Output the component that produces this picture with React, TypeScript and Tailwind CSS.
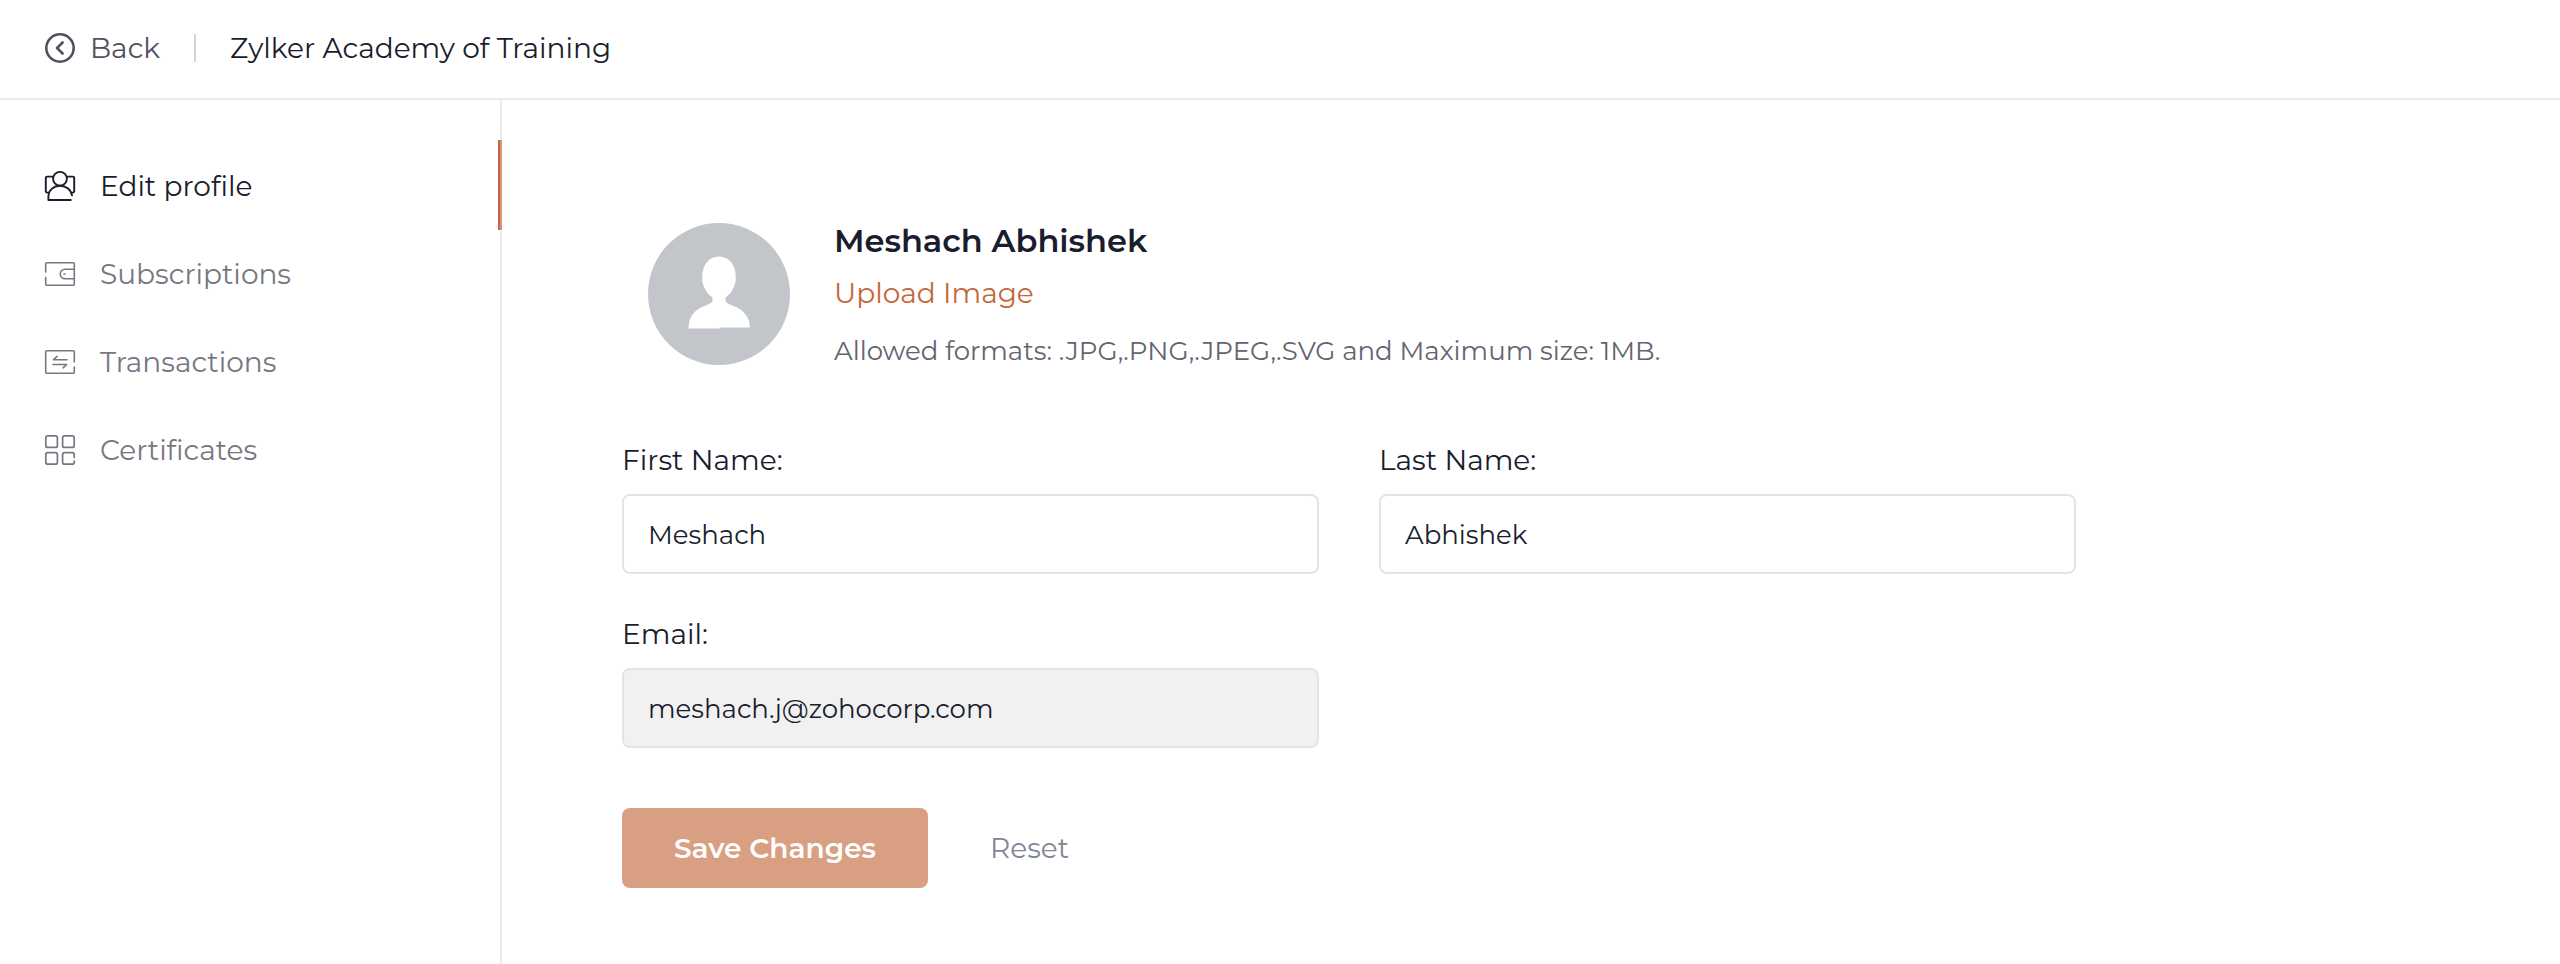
import { useState } from "react";
import type { ChangeEvent, FormEvent, ReactNode } from "react";

type TProfile = {
    firstName: string;
    lastName: string;
};

type TNavItem = {
    label: string;
    href: string;
    icon: ReactNode;
};

const savedProfile: TProfile = { firstName: "Meshach", lastName: "Abhishek" };
const email = "meshach.j@zohocorp.com";

const iconProps = {
    viewBox: "0 0 32 32",
    fill: "none",
    stroke: "currentColor",
    strokeLinecap: "round",
    strokeLinejoin: "round",
    className: "size-8 shrink-0",
    "aria-hidden": true,
} as const;

const ProfileIcon = () => (
    <svg {...iconProps} strokeWidth="1.9">
        <circle cx="16" cy="8.8" r="6.9" />
        <path d="M8.6 6.6H3.2A1.4 1.4 0 0 0 1.8 8v13.2a1.4 1.4 0 0 0 1.4 1.4h1.6" />
        <path d="M23.4 6.6h5.4A1.4 1.4 0 0 1 30.2 8v13.2a1.4 1.4 0 0 1-1.4 1.4h-1" />
        <path d="M26.8 30H4.4v-3.2C4.4 20.4 9.6 15.7 16 15.7c6.2 0 11.2 4 12 9.7" />
    </svg>
);

const WalletIcon = () => (
    <svg {...iconProps} strokeWidth="1.6">
        <path d="M1.7 14V6A1.3 1.3 0 0 1 3 4.7h26A1.3 1.3 0 0 1 30.3 6v20a1.3 1.3 0 0 1-1.3 1.3H3A1.3 1.3 0 0 1 1.7 26v-6.5" />
        <path d="M30.3 11.3H21a4.7 4.7 0 0 0 0 9.4h9.3" />
        <path d="M20 16h1" />
    </svg>
);

const TransactionIcon = () => (
    <svg {...iconProps} strokeWidth="1.6">
        <path d="M30.3 16V6A1.3 1.3 0 0 0 29 4.7H3A1.3 1.3 0 0 0 1.7 6v20A1.3 1.3 0 0 0 3 27.3h26a1.3 1.3 0 0 0 1.3-1.3v-5" />
        <path d="M23 13.7H9.5l3.5-3.3" />
        <path d="M9 18.5h13.7l-3.6 3.3" />
    </svg>
);

const CertificateIcon = () => (
    <svg {...iconProps} strokeWidth="1.7">
        <rect x="1.8" y="1.8" width="11.6" height="11.6" rx="2" />
        <rect x="18.6" y="1.8" width="11.6" height="11.6" rx="2" />
        <rect x="1.8" y="18.6" width="11.6" height="11.6" rx="2" />
        <path d="M30.2 23.4v-2.8a2 2 0 0 0-2-2h-7.6a2 2 0 0 0-2 2v7.6a2 2 0 0 0 2 2h7.6a2 2 0 0 0 2-2v-1" />
    </svg>
);

const BackIcon = () => (
    <svg {...iconProps} strokeWidth="2.6">
        <circle cx="16" cy="16" r="13.7" />
        <path d="M18.6 10.5L13 16l5.6 5.5" />
    </svg>
);

const Avatar = () => (
    <svg viewBox="0 0 142 142" className="size-[142px] shrink-0" role="img" aria-label="Profile picture">
        <circle cx="71" cy="71" r="71" fill="#c2c5ca" />
        <path
            fill="#fff"
            d="M71 33.5C61 33.5 54.2 42 54.2 54C54.2 63.500 58.5 70.5 64.5 74.5V77C64.5 80 61 81 56 83.2C46 87 40.5 94 40.5 105.5H71.5V104.5H101.8C101.8 94 96 87 86 83.2C81 81 77.5 80 77.5 77V74.5C83.5 70.5 87.8 63.5 87.8 54C87.8 42 81 33.5 71 33.5Z"
        />
    </svg>
);

const navItems: TNavItem[] = [
    { label: "Edit profile", href: "#profile", icon: <ProfileIcon /> },
    { label: "Subscriptions", href: "#subscriptions", icon: <WalletIcon /> },
    { label: "Transactions", href: "#transactions", icon: <TransactionIcon /> },
    { label: "Certificates", href: "#certificates", icon: <CertificateIcon /> },
];

const App = () => {
    const [active, setActive] = useState("Edit profile");
    const [profile, setProfile] = useState<TProfile>(savedProfile);

    const handleChange = (e: ChangeEvent<HTMLInputElement>) => {
        setProfile({ ...profile, [e.target.name]: e.target.value });
    };

    const handleSubmit = (e: FormEvent) => {
        e.preventDefault();
    };

    return (
        <div className="flex min-h-screen flex-col bg-white font-[Montserrat,Inter,sans-serif] text-[28px] leading-9 text-[#1a1d2e]">
            <header className="flex h-[100px] items-center border-b-2 border-[#ebebeb] px-11 pb-0.5">
                <a href="#back" className="flex items-center gap-3.5 text-[#4f5160]">
                    <BackIcon />
                    Back
                </a>
                <span className="mx-[34px] h-7 w-0.5 bg-[#d3d3d6]" />
                <h1>Zylker Academy of Training</h1>
            </header>

            <div className="flex flex-1">
                <aside className="w-[502px] shrink-0 border-r-2 border-[#ebebeb] pt-[42px]">
                    <nav>
                        {navItems.map((item) => (
                            <a
                                key={item.label}
                                href={item.href}
                                onClick={() => setActive(item.label)}
                                className={`relative flex h-[88px] items-center gap-6 pl-11 ${active === item.label ? "text-[#1a1d2e]" : "text-[#757882]"}`}
                            >
                                {item.icon}
                                {item.label}
                                {active === item.label && (
                                    <span className="absolute -top-0.5 -right-0.5 bottom-0 w-1 border-r-2 border-[#d09a82] bg-[#c4683c]" />
                                )}
                            </a>
                        ))}
                    </nav>
                </aside>

                <main className="flex-1 px-[120px] pt-[123px] pb-10">
                    <section className="flex gap-11 pl-[26px]">
                        <Avatar />
                        <div>
                            <h2 className="text-[32px] leading-9 font-semibold">Meshach Abhishek</h2>
                            <label className="mt-4 block w-fit cursor-pointer text-[#c4683c]">
                                Upload Image
                                <input type="file" accept=".jpg,.png,.jpeg,.svg" className="sr-only" />
                            </label>
                            <p className="mt-6 text-[26px] leading-8 text-[#62646f]">
                                Allowed formats: .JPG,.PNG,.JPEG,.SVG and Maximum size: 1MB.
                            </p>
                        </div>
                    </section>

                    <form onSubmit={handleSubmit} onReset={() => setProfile(savedProfile)} className="mt-[75px] max-w-[1454px]">
                        <div className="grid grid-cols-2 gap-x-[60px] gap-y-[42px]">
                            <div>
                                <label htmlFor="firstName" className="block">First Name:</label>
                                <input
                                    id="firstName"
                                    name="firstName"
                                    type="text"
                                    value={profile.firstName}
                                    onChange={handleChange}
                                    className="mt-4 h-20 w-full rounded-lg border-2 border-[#dfe6ea] bg-white px-6 pt-0.5 text-[26px]"
                                />
                            </div>
                            <div>
                                <label htmlFor="lastName" className="block">Last Name:</label>
                                <input
                                    id="lastName"
                                    name="lastName"
                                    type="text"
                                    value={profile.lastName}
                                    onChange={handleChange}
                                    className="mt-4 h-20 w-full rounded-lg border-2 border-[#dfe6ea] bg-white px-6 pt-0.5 text-[26px]"
                                />
                            </div>
                            <div>
                                <label htmlFor="email" className="block">Email:</label>
                                <input
                                    id="email"
                                    type="email"
                                    value={email}
                                    readOnly
                                    className="mt-4 h-20 w-full rounded-lg border-2 border-[#dfe6ea] bg-[#f1f1f1] px-6 pt-0.5 text-[26px]"
                                />
                            </div>
                        </div>

                        <div className="mt-[60px] flex items-center gap-[62px]">
                            <button type="submit" className="h-20 rounded-lg bg-[#d99f82] px-[52px] font-semibold text-white">
                                Save Changes
                            </button>
                            <button type="reset" className="text-[#7f8794]">Reset</button>
                        </div>
                    </form>
                </main>
            </div>
        </div>
    );
};

export default App;
